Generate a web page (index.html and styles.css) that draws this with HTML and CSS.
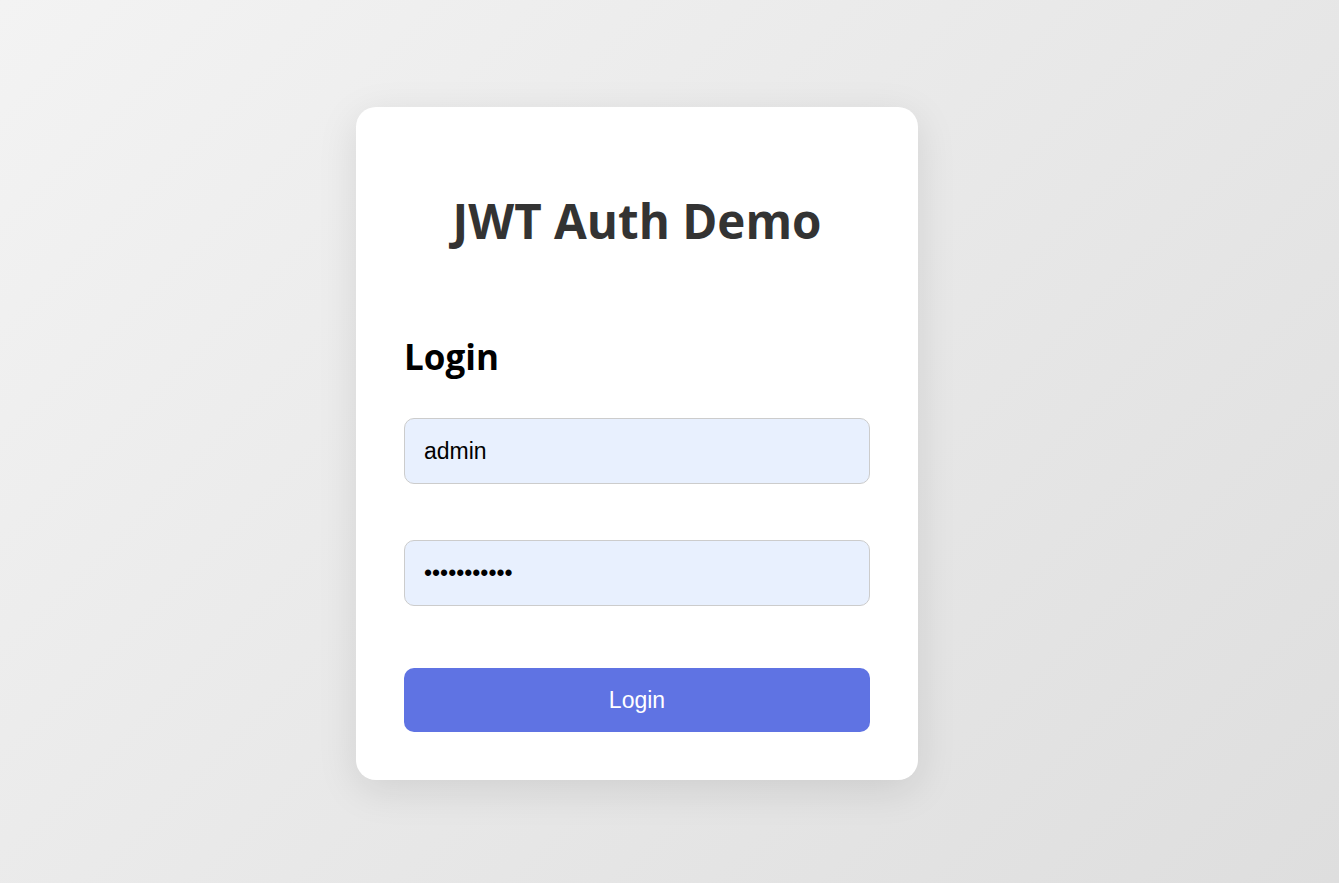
FILE: index.html
```html
<!DOCTYPE html>
<html lang="en">
<head>
<meta charset="utf-8">
<title>JWT Auth Demo</title>
<link rel="stylesheet" href="styles.css">
</head>
<body>
<main class="page">
  <section class="card">
    <h1 class="title">JWT Auth Demo</h1>
    <h2 class="subtitle">Login</h2>
    <form class="form">
      <input class="field" type="text" value="admin">
      <input class="field" type="password" value="password123">
      <button class="btn" type="button">Login</button>
    </form>
  </section>
</main>
</body>
</html>
```

FILE: styles.css
```css
html, body {
  margin: 0;
  padding: 0;
}
body {
  min-height: 883px;
  background: linear-gradient(135deg, #f3f3f3 0%, #dedede 100%);
  font-family: "Liberation Sans", Arial, sans-serif;
}
.page {
  min-height: 883px;
  display: flex;
  align-items: center;
  justify-content: center;
  padding-right: 65px;
  padding-top: 4px;
  box-sizing: border-box;
}
.card {
  width: 562px;
  box-sizing: border-box;
  padding: 48px;
  background: #fff;
  border-radius: 20px;
  box-shadow: 0 10px 40px rgba(0, 0, 0, 0.1);
  display: flex;
  flex-direction: column;
}
.title {
  margin: 34px 0 0;
  text-align: center;
  font-family: "Open Sans", sans-serif;
  font-weight: 700;
  font-size: 47.5px;
  line-height: 64px;
  color: #333;
}
.subtitle {
  margin: 82px 0 0;
  font-family: "Open Sans", sans-serif;
  font-weight: 700;
  font-size: 35px;
  line-height: 44px;
  color: #000;
}
.form {
  display: flex;
  flex-direction: column;
  margin-top: 39px;
}
.field {
  height: 66px;
  box-sizing: border-box;
  padding: 0 19px;
  border: 1px solid #cccccc;
  border-radius: 10px;
  background: #e8f0fe;
  font-family: "Liberation Sans", Arial, sans-serif;
  font-size: 23px;
  color: #000;
  outline: none;
}
.field + .field {
  margin-top: 56px;
}
.btn {
  margin-top: 62px;
  height: 64px;
  border: none;
  border-radius: 10px;
  background: #5f73e3;
  color: #fff;
  font-family: "Liberation Sans", Arial, sans-serif;
  font-size: 23px;
  cursor: pointer;
}
```
